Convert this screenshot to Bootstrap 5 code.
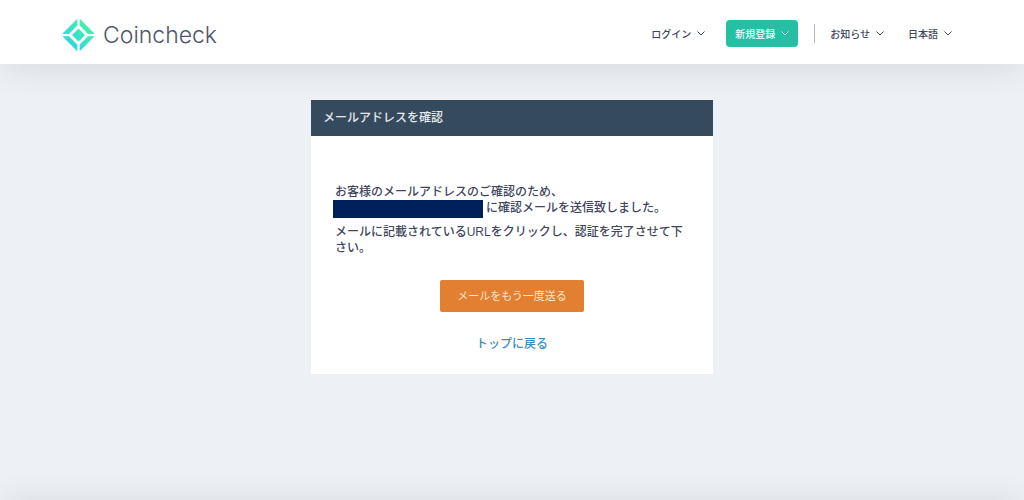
<!DOCTYPE html>
<html lang="ja">
<head>
<meta charset="utf-8">
<meta name="viewport" content="width=device-width, initial-scale=1">
<title>Coincheck</title>
<link href="https://cdn.jsdelivr.net/npm/bootstrap@5.3.0/dist/css/bootstrap.min.css" rel="stylesheet">
<style>
  body { background: #edf0f5; color: #41465f; font: 500 12px/16px "Liberation Sans", "Noto Sans CJK JP", sans-serif; }
  .site-header { height: 64px; padding: 2px 72px 0 62px; box-shadow: 0 10px 30px -4px rgba(40, 50, 60, .1); }
  .logo-text { font: 300 23px/32px Inter, sans-serif; color: #4f566b; }
  .menu-btn { --bs-btn-color: #41465f; --bs-btn-padding-x: 0; --bs-btn-padding-y: 0; --bs-btn-border-width: 0;
    font: 500 10px/27px "Noto Sans CJK JP", sans-serif; display: flex; align-items: center; gap: 6px; }
  .signup-btn { --bs-btn-color: #e8fff8; --bs-btn-bg: #27bfa4; --bs-btn-hover-bg: #22a991; --bs-btn-hover-color: #fff;
    --bs-btn-padding-x: 9px; --bs-btn-border-radius: 4px; margin: 0 16px 0 21px; }
  .menu-rule { width: 1px; height: 19px; background: #b4b7c2; margin-right: 15px; }
  .panel { width: 100%; max-width: 402px; margin-top: 36px; }
  .panel-title { background: #364a5e; color: #e6eaee; font-size: 12px; line-height: 16px; padding: 10px 12px; font-weight: 500; }
  .panel-content { padding: 48px 24px 22px; }
  .panel-content p { margin-bottom: 8px; }
  .mail-mask { display: inline-block; width: 150px; height: 18px; margin: 0 3px -2px -2px; background: #00205b; vertical-align: top; }
  .resend-btn { --bs-btn-color: #ffe6cf; --bs-btn-bg: #e37f31; --bs-btn-hover-bg: #cf6f25; --bs-btn-hover-color: #fff;
    --bs-btn-padding-x: 17px; --bs-btn-padding-y: 8px; --bs-btn-border-width: 0; --bs-btn-border-radius: 2px;
    font-size: 11px; line-height: 16px; }
  .top-link { color: #3c8dbf; }
  .site-footer { height: 40px; overflow: hidden; position: relative; }
  .site-footer::after { content: ""; position: absolute; inset: 100% 0 auto; height: 80px; box-shadow: 0 -4px 30px -4px rgba(40, 50, 60, .1); }
</style>
</head>
<body class="d-flex flex-column min-vh-100">
<header class="site-header bg-white d-flex align-items-center justify-content-between">
  <a href="#" class="d-flex align-items-center gap-2 pt-1 text-decoration-none" aria-label="Coincheck">
    <svg width="33" height="34" viewBox="0 0 33 34" aria-hidden="true">
      <defs><linearGradient id="mint" gradientUnits="userSpaceOnUse" x1="6" y1="28" x2="27" y2="6"><stop offset="0" stop-color="#2ad7e4"/><stop offset="1" stop-color="#4bf0a5"/></linearGradient></defs>
      <path fill="url(#mint)" d="M15.300 1V7.500L7 15.900H.800V15.200L15 1zM17.700 1V7.500L26 15.900H32.200V15.200L18 1zM.800 18.200H7L15.300 26.500V33H15L.800 18.800zM32.200 18.200H26L17.700 26.500V33H18L32.200 18.800zM16.500 10.500L23 17L16.500 23.500L10 17z"/>
    </svg>
    <span class="logo-text">Coincheck</span>
  </a>
  <nav class="d-flex align-items-center">
    <button type="button" class="btn menu-btn">ログイン <svg width="8" height="5" viewBox="0 0 8 5" fill="none" stroke="currentColor" aria-hidden="true"><path d="M.500 .500L4 4L7.500 .500"/></svg></button>
    <button type="button" class="btn menu-btn signup-btn">新規登録 <svg width="8" height="5" viewBox="0 0 8 5" fill="none" stroke="currentColor" aria-hidden="true"><path d="M.500 .500L4 4L7.500 .500"/></svg></button>
    <span class="menu-rule"></span>
    <button type="button" class="btn menu-btn me-4">お知らせ <svg width="8" height="5" viewBox="0 0 8 5" fill="none" stroke="currentColor" aria-hidden="true"><path d="M.500 .500L4 4L7.500 .500"/></svg></button>
    <button type="button" class="btn menu-btn">日本語 <svg width="8" height="5" viewBox="0 0 8 5" fill="none" stroke="currentColor" aria-hidden="true"><path d="M.500 .500L4 4L7.500 .500"/></svg></button>
  </nav>
</header>
<main class="flex-grow-1 d-flex justify-content-center align-items-start">
  <section class="panel bg-white">
    <h1 class="panel-title m-0">メールアドレスを確認</h1>
    <div class="panel-content">
      <p>お客様のメールアドレスのご確認のため、<br><span class="mail-mask"></span>に確認メールを送信致しました。</p>
      <p>メールに記載されているURLをクリックし、認証を完了させて下さい。</p>
      <div class="d-flex justify-content-center pt-3"><button type="button" class="btn resend-btn">メールをもう一度送る</button></div>
      <div class="text-center pt-4"><a href="#" class="top-link text-decoration-none">トップに戻る</a></div>
    </div>
  </section>
</main>
<footer class="site-footer"></footer>
<script src="https://cdn.jsdelivr.net/npm/bootstrap@5.3.0/dist/js/bootstrap.bundle.min.js"></script>
</body>
</html>
